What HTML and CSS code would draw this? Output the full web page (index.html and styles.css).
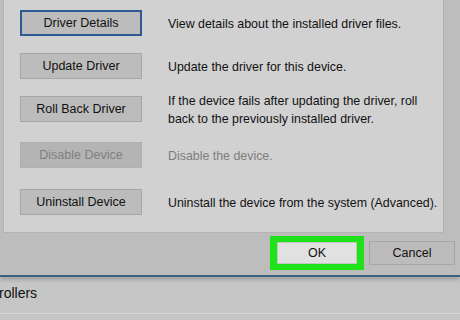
FILE: index.html
```html
<!DOCTYPE html>
<html>
	<head>
		<meta charset="utf-8" />
		<title>Driver</title>
		<link rel="stylesheet" href="styles.css">
	</head>
	<body>
		<div class="window">
			<div class="tabPanel">
				<div class="row">
					<button class="btn focused">Driver Details</button>
					<div class="desc">View details about the installed driver files.</div>
				</div>
				<div class="row">
					<button class="btn">Update Driver</button>
					<div class="desc">Update the driver for this device.</div>
				</div>
				<div class="row">
					<button class="btn">Roll Back Driver</button>
					<div class="desc">If the device fails after updating the driver, roll<br>back to the previously installed driver.</div>
				</div>
				<div class="row disabled">
					<button class="btn" disabled>Disable Device</button>
					<div class="desc">Disable the device.</div>
				</div>
				<div class="row last">
					<button class="btn">Uninstall Device</button>
					<div class="desc">Uninstall the device from the system (Advanced).</div>
				</div>
			</div>
			<div class="footer">
				<div class="highlight">
					<button class="btn ok">OK</button>
				</div>
				<button class="btn cancel">Cancel</button>
			</div>
		</div>
		<div class="treeRow">rollers</div>
	</body>
</html>
```

FILE: styles.css
```css
*,
*::before,
*::after{
	box-sizing: border-box;
}
body{
	margin: 0;
	width: 460px;
	height: 320px;
	overflow: hidden;
	background: #c6c6c6;
	font-family: "Liberation Sans", Arial, sans-serif;
	color: #111;
}
.window{
	background: #bdbdbd;
	border-bottom: 2px solid #3d5f80;
	box-shadow: 0 3px 4px rgba(0,0,0,0.18);
	height: 277px;
}
.tabPanel{
	margin-left: 3px;
	width: 441px;
	height: 233px;
	background: #d1d1d1;
	border: 1px solid #b4b4b4;
	border-top: none;
	padding: 10px 0 0 16px;
	display: flex;
	flex-direction: column;
	gap: 17px;
}
.row{
	display: flex;
	align-items: center;
	gap: 26px;
	height: 26px;
}
.row.disabled{
	margin-top: 3px;
}
.row.last{
	margin-top: 4px;
}
.btn{
	font-family: "Liberation Sans", Arial, sans-serif;
	font-size: 12.5px;
	color: #111;
	background: #bcbcbc;
	border: 1px solid #a6a6a6;
	height: 26px;
	padding: 0;
	flex: none;
	width: 122px;
}
.btn.focused{
	border: 2px solid #2d5a92;
}
.btn[disabled]{
	background: #b4b4b4;
	color: #808080;
	border-color: #b0b0b0;
}
.desc{
	font-size: 12.4px;
	line-height: 18px;
	white-space: nowrap;
	padding-top: 1px;
}
.disabled .desc{
	color: #7d7d7d;
}
.footer{
	display: flex;
	justify-content: flex-end;
	align-items: flex-start;
	gap: 5px;
	padding: 3px 5px 0 0;
}
.highlight{
	background: #20e21a;
	padding: 6px 7px;
	width: 94px;
	height: 34px;
}
.btn.ok{
	width: 80px;
	height: 22px;
	background: #e1e1e1;
	border: 1px solid #c4c4c4;
}
.btn.cancel{
	width: 86px;
	height: 24px;
	margin-top: 5px;
}
.treeRow{
	font-size: 14px;
	padding: 8px 0 0 0;
	height: 37px;
	border-bottom: 1px solid #d8d8d8;
	margin-left: -1px;
}
```
